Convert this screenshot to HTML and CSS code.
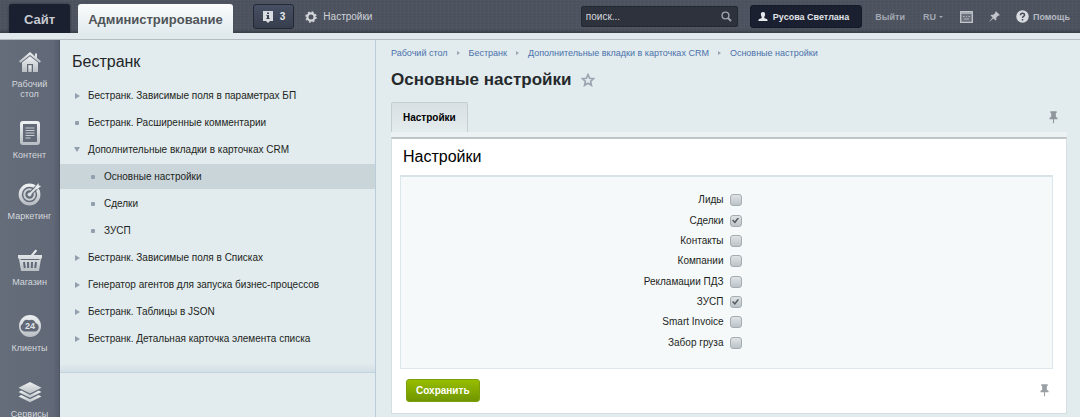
FILE: index.html
```html
<!DOCTYPE html>
<html lang="ru">
<head>
<meta charset="utf-8">
<title>Основные настройки</title>
<link rel="stylesheet" href="styles.css">
</head>
<body>
<svg class="defs" aria-hidden="true">
  <defs>
    <linearGradient id="metal" x1="0" y1="0" x2="0" y2="1"><stop offset="0" stop-color="#eef1f2"/><stop offset="1" stop-color="#b9bfc4"/></linearGradient>
    <symbol id="pin" viewBox="0 0 10 14"><path d="M1.500 0h7v2H7.600v4.200L9.500 7.500V9H5.600v4.500H4.400V9H.5V7.500l1.900-1.300V2h-.9z"/></symbol>
  </defs>
</svg>
<header class="topbar">
  <nav class="modes">
    <a class="mode mode--site" href="#">Сайт</a>
    <a class="mode mode--active" href="#">Администрирование</a>
  </nav>
  <button class="notify" type="button">
    <svg width="12" height="12" viewBox="0 0 12 12"><path fill="#d9dde1" d="M1 0h10v10H8l-2 2-2-2H1z"/><path fill="#3a4150" d="M5 1.500h2v1.500H5zM4.500 4H7v3h.6v1H4.400V7H5V5h-.5z"/></svg>
    3
  </button>
  <a class="toplink toplink--settings" href="#">
    <svg width="12" height="12" viewBox="0 0 12 12"><circle cx="6" cy="6" r="3.600" fill="none" stroke="#d3d6da" stroke-width="2.200"/><circle cx="6" cy="6" r="5" fill="none" stroke="#d3d6da" stroke-width="1.400" stroke-dasharray="2 1.930"/></svg>
    Настройки
  </a>
  <form class="search">
    <input class="search__field" type="text" placeholder="поиск..." aria-label="поиск">
    <svg class="search__icon" width="11" height="11" viewBox="0 0 11 11"><circle cx="4.500" cy="4.500" r="3.400" fill="none" stroke="#a0a5ad" stroke-width="1.400"/><path d="M7 7l3 3" stroke="#a0a5ad" stroke-width="1.800"/></svg>
  </form>
  <button class="user" type="button">
    <svg width="10" height="10" viewBox="0 0 10 10"><path fill="#e6e9ec" d="M5 0c1.500 0 2.200 1 2.100 2.500C7 4 6.300 4.800 6.200 5.300c0 1 .6 1 1.800 1.400C9.300 7.200 9.600 7.600 9.600 9H.4c0-1.400.3-1.800 1.600-2.300 1.200-.4 1.800-.4 1.800-1.400-.1-.5-.8-1.300-.9-2.800C2.800 1 3.500 0 5 0z"/></svg>
    Русова Светлана
  </button>
  <a class="toplink toplink--exit" href="#">Выйти</a>
  <button class="lang" type="button">RU<span class="lang__caret"></span></button>
  <button class="icon-btn icon-btn--keyboard" type="button" aria-label="Клавиатура">
    <svg width="13" height="12" viewBox="0 0 13 12"><path fill="#6b717c" stroke="#c3c7cc" stroke-width="1.300" d="M.7.700h11.600v10.600H.700z"/><path fill="#a9aeb6" d="M1 1h11v2H1z"/><path stroke="#b4b8bf" d="M3 5.500h1.500M6 5.500h1M8.500 5.500H10M4 8h5"/></svg>
  </button>
  <button class="icon-btn icon-btn--pin" type="button" aria-label="Закрепить">
    <svg width="11" height="11" viewBox="0 0 11 11"><path fill="#c0c4ca" d="M7 .2L10.800 4l-.8.800-.7-.2L7.200 6.700l.1 2L6.500 9.500 4.400 7.400.4 10.700l-.1-.1 3.300-4L1.500 4.500l.8-.8 2 .1L6.400 1.700 6.200 1z"/></svg>
  </button>
  <a class="toplink toplink--help" href="#">
    <svg width="13" height="13" viewBox="0 0 13 13"><circle cx="6.500" cy="6.500" r="6.200" fill="#d8dbdf"/><path fill="none" stroke="#454b57" stroke-width="1.500" d="M4.500 5.200C4.500 2.600 8.500 2.600 8.500 5c0 1.500-2 1.400-2 3M6.500 9v1.500"/></svg>
    Помощь
  </a>
</header>
<div class="workspace">
  <nav class="rail">
    <a class="rail__item rail__item--tight" href="#">
      <svg width="24" height="24" viewBox="0 0 24 24" fill="url(#metal)"><path d="M12 2l5 4.200V3.500h2v4.400L23 11.300l-1.400 1.400L12 4.900 2.400 12.700 1 11.300z"/><path d="M4 12.500l8-6.300 8 6.300V22h-5v-8H9v8H4z"/><path d="M10.300 15.200h3.400V22h-3.400z"/></svg>
      <span>Рабочий<br>стол</span>
    </a>
    <a class="rail__item rail__item--tight" href="#">
      <svg width="24" height="24" viewBox="0 0 24 24"><rect x="3.500" y="1.500" width="17" height="21" rx="1.500" fill="none" stroke="url(#metal)" stroke-width="3"/><path d="M7.500 7h9M7.500 9.500h9M7.500 12h9M7.500 14.500h9M7.500 17h5" stroke="#c8cdd1" stroke-width="1.200"/></svg>
      <span>Контент</span>
    </a>
    <a class="rail__item" href="#">
      <svg width="24" height="24" viewBox="0 0 24 24" fill="none"><circle cx="11.500" cy="12.500" r="9.300" stroke="url(#metal)" stroke-width="3.200"/><circle cx="11.500" cy="12.500" r="5.200" stroke="#ced2d6" stroke-width="2"/><circle cx="11.500" cy="12.500" r="2" fill="#d5d9dc"/><path stroke="#616877" stroke-width="4" d="M14 10l7-7"/><path stroke="#dfe3e5" stroke-width="2" d="M11.500 12.500L20 4"/><path fill="#e8ebed" d="M17 5.500L20.500 1l.3 2.500 2.400.5-4.400 3.600z"/></svg>
      <span>Маркетинг</span>
    </a>
    <a class="rail__item" href="#">
      <svg width="24" height="24" viewBox="0 0 24 24"><path fill="url(#metal)" d="M0 7h12.800l4.700-5.600 1.700 1.300L15.700 7H24v3.500h-1L21 23H3L1 10.500H0z"/><path stroke="#616877" stroke-width="1" d="M2.500 11.500h19"/><path stroke="#616877" stroke-width="2" d="M6 14l.8 6M10 14l.2 6M14 14l-.2 6M18 14l-.8 6"/></svg>
      <span>Магазин</span>
    </a>
    <a class="rail__item" href="#">
      <svg width="24" height="24" viewBox="0 0 24 24"><circle cx="12" cy="12" r="11" fill="url(#metal)"/><path fill="#616877" d="M7 17.500a4.300 4.300 0 0 1-2.200-8C5.200 6.200 8.500 4.800 11 6.300c3-1.500 6 0 6.500 2.700 4.500 1 4.300 8.500-.5 8.500z"/><text class="rail__badge" x="12" y="15" text-anchor="middle">24</text></svg>
      <span>Клиенты</span>
    </a>
    <a class="rail__item" href="#">
      <svg width="24" height="24" viewBox="0 0 24 24" fill="url(#metal)"><path d="M12 2l11.500 5.800L12 13.600.5 7.800z"/><path d="M.5 12l2.800-1.400 8.700 4.400 8.700-4.400 2.800 1.400L12 17.800z"/><path d="M.5 16.400L3.300 15l8.700 4.300 8.700-4.300 2.800 1.400L12 22.200z"/></svg>
      <span>Сервисы</span>
    </a>
  </nav>
  <aside class="tree">
    <h2 class="tree__title">Бестранк</h2>
    <ul class="tree__list">
      <li><a class="node" href="#"><i class="mark mark--closed"></i>Бестранк. Зависимые поля в параметрах БП</a></li>
      <li><a class="node" href="#"><i class="mark mark--leaf"></i>Бестранк. Расширенные комментарии</a></li>
      <li><a class="node" href="#"><i class="mark mark--open"></i>Дополнительные вкладки в карточках CRM</a></li>
      <li><a class="node node--child node--current" href="#"><i class="mark mark--leaf"></i>Основные настройки</a></li>
      <li><a class="node node--child" href="#"><i class="mark mark--leaf"></i>Сделки</a></li>
      <li><a class="node node--child" href="#"><i class="mark mark--leaf"></i>ЗУСП</a></li>
      <li><a class="node" href="#"><i class="mark mark--closed"></i>Бестранк. Зависимые поля в Списках</a></li>
      <li><a class="node" href="#"><i class="mark mark--closed"></i>Генератор агентов для запуска бизнес-процессов</a></li>
      <li><a class="node" href="#"><i class="mark mark--closed"></i>Бестранк. Таблицы в JSON</a></li>
      <li><a class="node" href="#"><i class="mark mark--closed"></i>Бестранк. Детальная карточка элемента списка</a></li>
    </ul>
  </aside>
  <main class="content">
    <nav class="crumbs">
      <a href="#">Рабочий стол</a><i class="crumbs__sep"></i>
      <a href="#">Бестранк</a><i class="crumbs__sep"></i>
      <a href="#">Дополнительные вкладки в карточках CRM</a><i class="crumbs__sep"></i>
      <a href="#">Основные настройки</a>
    </nav>
    <div class="heading">
      <h1 class="heading__text">Основные настройки</h1>
      <button class="icon-btn" type="button" aria-label="В избранное">
        <svg width="14" height="14" viewBox="0 0 14 14"><path fill="none" stroke="#9ba5b1" stroke-width="1.600" d="M7 1.500l1.600 3.700 4 .4-3 2.700.9 4L7 10.200l-3.500 2.100.9-4-3-2.700 4-.4z"/></svg>
      </button>
    </div>
    <div class="tabs">
      <button class="tab" type="button">Настройки</button>
      <button class="icon-btn tabs__pin" type="button" aria-label="Закрепить вкладки"><svg width="9" height="13" fill="#8f979d"><use href="#pin"/></svg></button>
    </div>
    <form class="card">
      <h2 class="card__title">Настройки</h2>
      <div class="options">
        <div class="option"><label for="leads">Лиды</label><input class="check" type="checkbox" id="leads"></div>
        <div class="option"><label for="deals">Сделки</label><input class="check" type="checkbox" id="deals" checked></div>
        <div class="option"><label for="contacts">Контакты</label><input class="check" type="checkbox" id="contacts"></div>
        <div class="option"><label for="companies">Компании</label><input class="check" type="checkbox" id="companies"></div>
        <div class="option"><label for="claims">Рекламации ПДЗ</label><input class="check" type="checkbox" id="claims"></div>
        <div class="option"><label for="zusp">ЗУСП</label><input class="check" type="checkbox" id="zusp" checked></div>
        <div class="option"><label for="invoice">Smart Invoice</label><input class="check" type="checkbox" id="invoice"></div>
        <div class="option"><label for="pickup">Забор груза</label><input class="check" type="checkbox" id="pickup"></div>
      </div>
      <div class="actions">
        <button class="save" type="submit">Сохранить</button>
        <button class="icon-btn" type="button" aria-label="Закрепить панель"><svg width="9" height="13" fill="#9a9fa4"><use href="#pin"/></svg></button>
      </div>
    </form>
  </main>
</div>
</body>
</html>
```

FILE: styles.css
```css
* { box-sizing: border-box; }

body {
  display: flex;
  flex-direction: column;
  height: 100vh;
  margin: 0;
  overflow: hidden;
  background: #e2ebed;
  color: #1c1f22;
  font: 10px/12px "Liberation Sans", Arial, sans-serif;
}

a { color: inherit; text-decoration: none; }
h1, h2, ul { margin: 0; padding: 0; font-weight: normal; list-style: none; }
button, input { margin: 0; padding: 0; border: 0; background: none; color: inherit; font: inherit; }
svg { display: block; flex: none; }
.defs { position: absolute; width: 0; height: 0; }

/* Top bar */
.topbar {
  display: flex;
  flex: none;
  align-items: center;
  height: 33px;
  padding: 0 10px 0 9px;
  background:
    linear-gradient(rgba(0, 0, 0, 0) 88%, rgba(0, 0, 0, .25)),
    repeating-linear-gradient(90deg, rgba(255, 255, 255, .02) 0 1px, transparent 1px 4px),
    repeating-linear-gradient(rgba(255, 255, 255, .02) 0 1px, transparent 1px 3px),
    #4b515d;
  color: #d0d3d8;
}
.modes { display: flex; align-self: stretch; align-items: flex-end; gap: 8px; }
.mode {
  height: 29px;
  padding: 0 10px;
  border-radius: 3px 3px 0 0;
  font-weight: bold;
  font-size: 13px;
  line-height: 31px;
}
.mode--site { padding: 0 15px; background: #1b2030; color: #c5c9cf; box-shadow: 0 0 2px #20242e; }
.mode--active { background: linear-gradient(#fbfcfc, #e2ebee); color: #505459; }
.notify {
  display: flex;
  align-items: center;
  gap: 6px;
  height: 25px;
  margin-left: 20px;
  padding: 0 8px;
  border: 1px solid #232834;
  border-radius: 3px;
  background: linear-gradient(#475064, #373e4d);
  color: #e6e8eb;
  font-weight: bold;
}
.toplink { display: flex; align-items: center; gap: 6px; }
.toplink--settings { margin-left: 11px; }
.toplink--exit, .toplink--help, .lang, .user { font-weight: bold; font-size: 9px; }
.toplink--exit { margin-left: 13px; color: #a3a8b1; }
.toplink--help { gap: 4px; margin-left: 16px; color: #b5b9c0; }
.search {
  display: flex;
  align-items: center;
  width: 157px;
  height: 21px;
  margin-left: auto;
  padding: 0 5px 0 4px;
  border: 1px solid #23272f;
  border-radius: 2px;
  background: #2e323d;
}
.search__field { flex: 1; min-width: 0; outline: 0; }
.search__field::placeholder { color: #d5d8dc; opacity: 1; }
.user {
  display: flex;
  align-items: center;
  gap: 5px;
  height: 23px;
  margin-left: 12px;
  padding: 0 12px 0 7px;
  border: 1px solid #151a27;
  border-radius: 3px;
  background: #1b2030;
  color: #e0e3e7;
}
.lang { display: flex; align-items: center; gap: 3px; margin-left: 18px; color: #a3a8b1; }
.lang__caret { border: 2px solid transparent; border-top-color: #a3a8b1; border-bottom: 0; }
.icon-btn { display: block; }
.icon-btn--keyboard { margin-left: 17px; }
.icon-btn--pin { margin-left: 16px; }

/* Columns */
.workspace {
  display: flex;
  flex: 1;
  min-height: 0;
  border-top: 6px solid #e0e9ec;
  box-shadow: inset 0 1px #b4bec2;
}
.rail {
  flex: none;
  width: 60px;
  margin-top: 1px;
  padding-top: 10px;
  border-right: 1px solid #505666;
  background: linear-gradient(90deg, #656d7a, #616877 90%, #565d6c);
  color: #d4d8dc;
  font-size: 9px;
  line-height: 10px;
  text-align: center;
}
.rail__item { display: flex; flex-direction: column; align-items: center; gap: 5px; margin-bottom: 27px; }
.rail__item--tight { margin-bottom: 22px; }
.rail__badge { fill: #e0e3e6; font-weight: bold; font-size: 9px; }

.tree {
  flex: none;
  width: 316px;
  margin-top: 1px;
  border-right: 1px solid #bccbd9;
}
.tree__title { padding: 12px 12px 11px; font-size: 16px; line-height: 20px; color: #222629; }
.tree__list {
  display: flex;
  flex-direction: column;
  gap: 2px;
  padding-bottom: 21px;
  border-bottom: 1px solid #c5d3de;
  background: linear-gradient(transparent 97%, #d3dfe7);
}
.node { display: flex; align-items: center; gap: 6px; height: 25px; padding-left: 12px; }
.node--child { padding-left: 28px; }
.node--current { background: #cad5da; }
.mark { display: flex; align-items: center; justify-content: center; width: 10px; height: 10px; }
.mark::before { content: ""; }
.mark--leaf::before { width: 4px; height: 4px; border-radius: 1px; background: #929fac; }
.mark--closed::before { border: 3px solid transparent; border-left: 5px solid #929fac; border-right: 0; }
.mark--open::before { border: 3px solid transparent; border-top: 5px solid #929fac; border-bottom: 0; }

/* Page content */
.content { flex: 1; min-width: 0; padding: 9px 13px 0 15px; }
.crumbs { display: flex; align-items: center; gap: 9px; color: #4a72ab; font-size: 9px; line-height: 10px; }
.crumbs__sep { border: 2px solid transparent; border-left: 3px solid #97a5b0; border-right: 0; }
.heading { display: flex; align-items: center; gap: 10px; margin-top: 12px; }
.heading__text { font-weight: bold; font-size: 17px; line-height: 20px; color: #25292c; }
.tabs {
  display: flex;
  align-items: flex-start;
  justify-content: space-between;
  margin-top: 12px;
  border-bottom: 5px solid #ecf2f4;
}
.tab {
  height: 30px;
  padding: 0 11px;
  border: 1px solid #c5ced2;
  border-bottom: 0;
  border-radius: 2px 2px 0 0;
  background: linear-gradient(#d8e0e3, #e5ecee);
  color: #000;
  font-weight: bold;
}
.tabs__pin { margin: 9px 9px 0 0; }
.card {
  padding: 9px 13px 11px 8px;
  border: 1px solid #d5dfe2;
  border-top: 2px solid #bdc5c8;
  background: #fff;
}
.card__title { padding-left: 3px; font-size: 16px; line-height: 18px; color: #000; }
.options {
  display: grid;
  grid-auto-rows: 1fr;
  min-height: 194px;
  margin-top: 9px;
  padding: 13px 0 15px;
  border: 1px solid #dce7eb;
  border-top: 2px solid #d8e3e7;
  background: #f5f9fa;
}
.option { display: grid; grid-template-columns: 1fr 1fr; align-items: center; gap: 6px; }
.option label { text-align: right; }
.check {
  appearance: none;
  display: flex;
  align-items: center;
  justify-content: center;
  width: 12px;
  height: 12px;
  border: 1px solid #a6adb2;
  border-radius: 3px;
  background: linear-gradient(#dfe3e5, #bcc3c8);
}
.check:checked::before {
  content: "";
  width: 7px;
  height: 6px;
  background: #555c62;
  clip-path: polygon(0 50%, 18% 32%, 38% 60%, 82% 0, 100% 12%, 42% 100%);
}
.actions { display: flex; align-items: center; justify-content: space-between; margin-top: 10px; padding: 0 4px 0 6px; }
.save {
  height: 23px;
  padding: 0 9px;
  border: 1px solid #7d9f0c;
  border-radius: 3px;
  background: linear-gradient(#97bd00, #709600);
  color: #fff;
  font-weight: bold;
}
```
